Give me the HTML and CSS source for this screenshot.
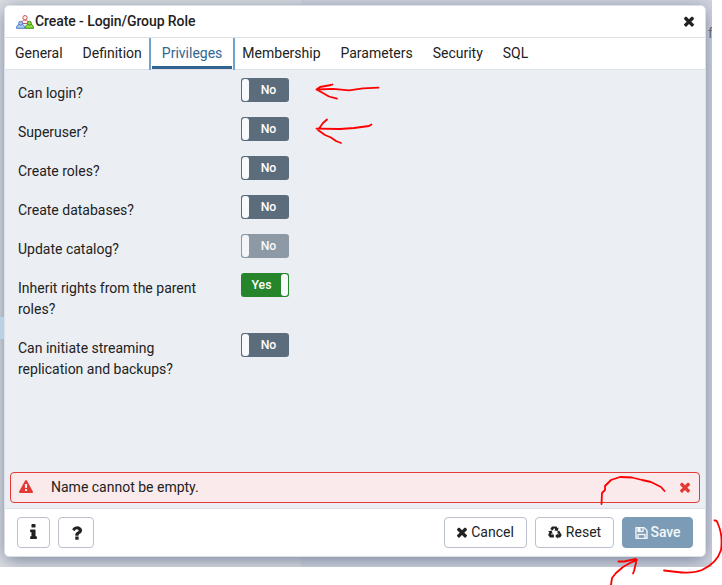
FILE: index.html
```html
<!DOCTYPE html>
<html lang="en">
<head>
<meta charset="utf-8">
<title>Create - Login/Group Role</title>
<link rel="stylesheet" href="styles.css">
</head>
<body>
<svg class="defs" aria-hidden="true">
  <symbol id="times" viewBox="302 302 1188 1284"><path d="M1490 1322q0 40-28 68l-136 136q-28 28-68 28t-68-28l-294-294-294 294q-28 28-68 28t-68-28l-136-136q-28-28-28-68t28-68l294-294-294-294q-28-28-28-68t28-68l136-136q28-28 68-28t68 28l294 294 294-294q28-28 68-28t68 28l136 136q28 28 28 68t-28 68l-294 294 294 294q28 28 28 68z"/></symbol>
</svg>
<div class="backdrop">
  <span class="behind-row"></span>
  <span class="behind-text">f</span>
  <section class="dialog">
    <header class="header">
      <svg class="role-icon" viewBox="0 0 18 14">
        <g stroke="#c9595f" fill="#ffe9e9"><path d="M5.500 8.500c0-2.500 1.500-3.500 3.500-3.500s3.500 1 3.500 3.500z"/><circle cx="9" cy="2.700" r="2.200"/></g>
        <g stroke="#4a7cc2" fill="#a9c9f2"><path d="M.5 13.300c0-2.800 1.700-4.300 4.100-4.300s4.100 1.500 4.100 4.300z"/><circle cx="4.600" cy="8.200" r="1.900"/></g>
        <g stroke="#3a8a17" fill="#8fdf3c"><path d="M9.300 13.300c0-2.800 1.700-4.300 4.100-4.300s4.100 1.500 4.100 4.300z"/><circle cx="13.400" cy="8.200" r="1.900"/></g>
      </svg>
      <h1 class="title">Create - Login/Group Role</h1>
      <svg class="times close"><use href="#times"/></svg>
    </header>
    <nav class="tabs">
      <a class="tab">General</a><a class="tab">Definition</a><a class="tab active">Privileges</a><a class="tab">Membership</a><a class="tab">Parameters</a><a class="tab">Security</a><a class="tab">SQL</a>
    </nav>
    <main class="body">
      <div class="row"><label>Can login?</label><span class="toggle"><i></i><b>No</b></span></div>
      <div class="row"><label>Superuser?</label><span class="toggle"><i></i><b>No</b></span></div>
      <div class="row"><label>Create roles?</label><span class="toggle"><i></i><b>No</b></span></div>
      <div class="row"><label>Create databases?</label><span class="toggle"><i></i><b>No</b></span></div>
      <div class="row"><label>Update catalog?</label><span class="toggle disabled"><i></i><b>No</b></span></div>
      <div class="row"><label>Inherit rights from the parent roles?</label><span class="toggle on"><b>Yes</b><i></i></span></div>
      <div class="row"><label>Can initiate streaming replication and backups?</label><span class="toggle"><i></i><b>No</b></span></div>
      <div class="alert">
        <svg class="warn" viewBox="0 0 1792 1664"><path d="M1024 1375v-190q0-14-9.500-23.500t-22.500-9.500h-192q-13 0-22.500 9.500t-9.500 23.500v190q0 14 9.500 23.500t22.500 9.500h192q13 0 22.500-9.500t9.500-23.500zm-2-374l18-459q0-12-10-19-13-11-24-11h-220q-11 0-24 11-10 7-10 21l17 457q0 10 10 16.500t24 6.500h185q14 0 23.500-6.500t10.500-16.500zm-14-934l768 1408q35 63-2 126-17 29-46.500 46t-63.500 17h-1536q-34 0-63.500-17t-46.500-46q-37-63-2-126l768-1408q17-31 47-49t65-18 65 18 47 49z"/></svg>
        <span class="message">Name cannot be empty.</span>
        <svg class="times dismiss"><use href="#times"/></svg>
      </div>
    </main>
    <footer class="footer">
      <button class="btn info"><svg viewBox="576 128 640 1408"><path d="M1216 1344v128q0 26-19 45t-45 19h-512q-26 0-45-19t-19-45v-128q0-26 19-45t45-19h64v-384h-64q-26 0-45-19t-19-45v-128q0-26 19-45t45-19h384q26 0 45 19t19 45v576h64q26 0 45 19t19 45zm-128-1152v192q0 26-19 45t-45 19h-256q-26 0-45-19t-19-45v-192q0-26 19-45t45-19h256q26 0 45 19t19 45z"/></svg></button>
      <button class="btn help"><svg viewBox="460 256 944 1280"><path d="M1088 1256v240q0 16-12 28t-28 12h-240q-16 0-28-12t-12-28v-240q0-16 12-28t28-12h240q16 0 28 12t12 28zm316-600q0 54-15.500 101t-35 76.500-55 59.500-57.500 43.500-61 35.500q-41 23-68.500 65t-27.500 67q0 17-12 32.500t-28 15.500h-240q-15 0-25.500-18.500t-10.500-37.500v-45q0-83 65-156.500t143-108.500q59-27 84-56t25-76q0-42-46.500-74t-107.500-32q-65 0-108 29-35 25-107 115-13 16-31 16-12 0-25-8l-164-125q-13-10-15.500-25t5.500-28q160-266 464-266 80 0 161 31t146 83 106 127.500 41 158.500z"/></svg></button>
      <button class="btn cancel"><svg class="times"><use href="#times"/></svg>Cancel</button>
      <button class="btn reset"><svg viewBox="0 0 14 13"><path d="M4.300.4h4.200l1.200 1.800 1-.6-1 3.500-3.400-.7 1-.6-1.100-1.700-1.500 2.400L2.300 3.100 3.600.9zM11.100 4.600l2.600 4.300-1.500 2.500H9.700v1.300L7.200 9.900l2.500-2.700v1.300h1.200L9 5.700zM.2 5.200l3.500-.8 1 3.500-1.100-.6-.6 1.200h2.900v3H2L.1 8.900l1.200-2.400z"/></svg>Reset</button>
      <button class="btn save"><svg viewBox="128 128 1536 1536"><path d="M512 1536h768v-384h-768v384zm896 0h128v-896q0-14-10-38.500t-20-34.500l-281-281q-10-10-34-20t-39-10v416q0 40-28 68t-68 28h-576q-40 0-68-28t-28-68v-416h-128v1280h128v-416q0-40 28-68t68-28h832q40 0 68 28t28 68v416zm-384-928v-320q0-13-9.500-22.500t-22.500-9.500h-192q-13 0-22.500 9.500t-9.500 22.500v320q0 13 9.500 22.500t22.500 9.500h192q13 0 22.500-9.500t9.500-22.500zm640 32v928q0 40-28 68t-68 28h-1344q-40 0-68-28t-28-68v-1344q0-40 28-68t68-28h928q40 0 88 20t76 48l280 280q28 28 48 76t20 88z"/></svg>Save</button>
    </footer>
  </section>
</div>
<svg class="ink" viewBox="0 0 722 585">
  <path d="M378.500 87.700L363 88.400 349 90.300 333 88.800 316.500 89.500M332.500 84.500L331 85 320 87 316.500 89.500 322 92.500 329 96.500 337 98.600"/>
  <path d="M371.500 124.500L369 126 354 128 340 129 316.500 128.600M327 119.500L323 123 318 130 325 135 331 137.500 336 141 341 143"/>
  <path d="M601.500 504L602 493 605 490 605 486 611 480 620 477 632 477.500 642 480 651 482 661 487 664.500 491"/>
  <path d="M714.500 520.500Q717 520 718 524 723 535 721 550 717 563 702 570 692 574 677 572L664 570.500"/>
  <path d="M611 585L612 578 616 573 623 567 630 563 637 560M618.500 561.500L624 561.500 636 559 636 563 634 571 633 573.500"/>
</svg>
</body>
</html>
```
FILE: styles.css
```css
* { box-sizing: border-box; }
body {
  margin: 0;
  width: 722px;
  height: 585px;
  overflow: hidden;
  background: #fff;
  color: #222;
  font: 14px/21px Roboto, sans-serif;
}
svg { display: block; flex: none; fill: currentColor; }
.defs { position: absolute; width: 0; height: 0; }
.backdrop {
  position: relative;
  width: 712px;
  height: 567px;
  padding: 5px 6px 10px 4px;
  overflow: hidden;
  background: linear-gradient(90deg, #dcdfe3 301px, #d3d6e0 301px);
}
.behind-row { position: absolute; left: 0; top: 317px; width: 6px; height: 22px; background: #b8d1e5; }
.behind-text { position: absolute; left: 708px; top: 23px; color: #666; }
.dialog {
  position: relative;
  display: flex;
  flex-direction: column;
  width: 702px;
  height: 552px;
  overflow: hidden;
  border: 1px solid #dde0e6;
  border-radius: 5px;
  background: #fff;
}
.backdrop::before {
  content: "";
  position: absolute;
  left: 5px;
  top: 5px;
  width: 700px;
  height: 551px;
  border-radius: 5px;
  box-shadow: 0 4px 18px #737f97;
}
.header { display: flex; align-items: center; height: 32px; padding: 0 11px; border-bottom: 1px solid #dde0e6; }
.role-icon { width: 18px; height: 14px; margin-top: 1px; stroke-width: 1; }
.title { flex: 1; margin: 0 0 0 1px; font: 500 14px/21px Roboto, sans-serif; letter-spacing: -0.08px; }
.times { width: 10px; height: 11px; }
.close { margin-top: -1px; }
.tabs { display: flex; height: 32px; border-bottom: 1px solid #dde0e6; }
.tab { padding: 5px 10px; white-space: nowrap; }
.active {
  margin: 0 -3px -1px;
  padding: 5px 11px;
  color: #326690;
  border: solid #6ea2cf;
  border-width: 0 2px;
  background: linear-gradient(#326690, #326690) 1px 28px / calc(100% - 2px) 3px no-repeat;
}
.body { display: flex; flex-direction: column; height: 438px; padding: 8px 5px 5px; background: #ebeef3; }
.row { display: flex; align-items: flex-start; margin-bottom: 15px; padding-left: 8px; }
.row label { width: 223px; padding: 5px 35px 0 0; margin-bottom: -2px; }
.toggle { display: flex; width: 48px; height: 24px; padding: 1px; border-radius: 3px; background: #5b6d7c; color: #fff; font-size: 12.250px; line-height: 22px; text-align: center; }
.toggle i { width: 7px; border-radius: 3px; background: #f8f9fb; }
.toggle b { flex: 1; font-weight: 500; }
.on { background: #26852b; }
.disabled { opacity: .65; }
.alert { display: flex; align-items: center; height: 31px; margin-top: auto; padding: 0 9px 0 8px; border: 1px solid #e53935; border-radius: 4px; background: #faeaeb; }
.alert svg { color: #e53935; }
.warn { width: 14px; height: 13px; margin-top: -2px; }
.message { flex: 1; margin-left: 18px; }
.footer { display: flex; align-items: center; height: 48px; padding: 0 12px; border-top: 1px solid #dde0e6; }
.btn { display: flex; align-items: center; justify-content: center; height: 31px; padding: 0; border: 1px solid #bac0cd; border-radius: 4px; background: #fff; color: #222; font: 14px/21px Roboto, sans-serif; }
.info { width: 33px; }
.info svg { width: 7px; height: 15px; margin-top: -2px; }
.help { width: 36px; margin-left: 8px; }
.help svg { width: 10px; height: 14px; margin-left: 1px; }
.cancel { width: 83px; margin-left: auto; gap: 4px; }
.reset { width: 79px; margin-left: 8px; gap: 4px; }
.reset svg { width: 14px; height: 13px; margin-top: -1px; }
.save { width: 71px; margin-left: 8px; gap: 3px; border-color: #7b9bb6; background: #7b9bb6; color: #f4f7fa; font-weight: 500; letter-spacing: -0.1px; }
.save svg { width: 13px; height: 12px; stroke: currentColor; stroke-width: 50; }
.ink { position: absolute; inset: 0; width: 722px; height: 585px; fill: none; stroke: #f00; stroke-width: 1.800; stroke-linecap: round; stroke-linejoin: round; pointer-events: none; }
```
